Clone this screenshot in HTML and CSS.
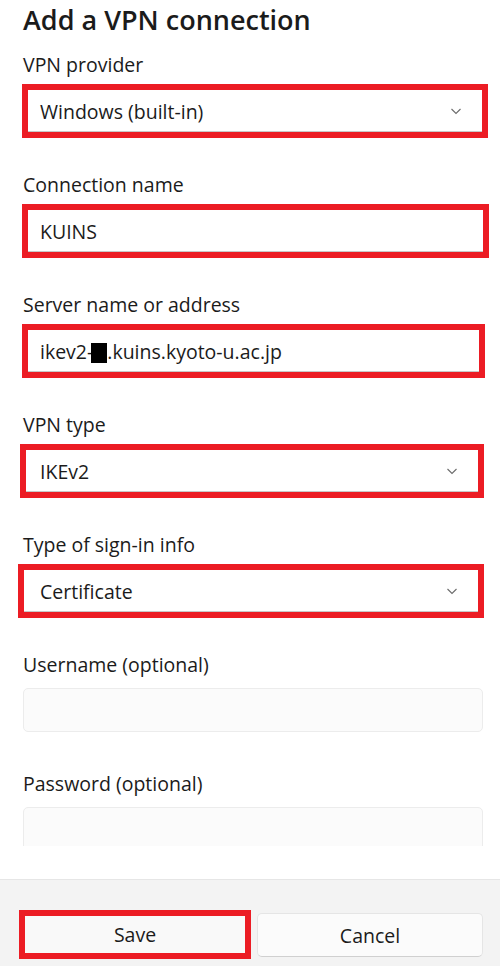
FILE: index.html
```html
<!DOCTYPE html>
<html lang="en">
<head>
    <meta charset="UTF-8">
    <meta name="viewport" content="width=device-width, initial-scale=1.0">
    <title>Add a VPN connection</title>
    <link rel="stylesheet" href="styles.css">
</head>
<body>
    <div class="dialog">
        <div class="scroll">
            <h1>Add a VPN connection</h1>

            <div class="group">
                <label>VPN provider</label>
                <div class="field marked">
                    <span>Windows (built-in)</span>
                    <svg class="chevron" width="12" height="12" viewBox="0 0 12 12"><path d="M1.5 4 L6 8.5 L10.5 4"/></svg>
                </div>
            </div>

            <div class="group">
                <label>Connection name</label>
                <div class="field marked wide">
                    <span>KUINS</span>
                </div>
            </div>

            <div class="group">
                <label>Server name or address</label>
                <div class="field marked narrow">
                    <span>ikev2-<i class="redact"></i>.kuins.kyoto-u.ac.jp</span>
                </div>
            </div>

            <div class="group">
                <label>VPN type</label>
                <div class="field marked shift">
                    <span>IKEv2</span>
                    <svg class="chevron" width="12" height="12" viewBox="0 0 12 12"><path d="M1.5 4 L6 8.5 L10.5 4"/></svg>
                </div>
            </div>

            <div class="group">
                <label>Type of sign-in info</label>
                <div class="field marked shift-more">
                    <span>Certificate</span>
                    <svg class="chevron" width="12" height="12" viewBox="0 0 12 12"><path d="M1.5 4 L6 8.5 L10.5 4"/></svg>
                </div>
            </div>

            <div class="group">
                <label>Username (optional)</label>
                <div class="field plain"></div>
            </div>

            <div class="group loose">
                <label>Password (optional)</label>
                <div class="field plain"></div>
            </div>
        </div>

        <div class="footer">
            <button class="btn marked-btn">Save</button>
            <button class="btn">Cancel</button>
        </div>
    </div>
</body>
</html>
```

FILE: styles.css
```css
body {
    margin: 0;
    background: #fff;
    color: #1b1b1b;
    font-family: 'Open Sans', 'Noto Sans', sans-serif;
}
.dialog {
    width: 500px;
    height: 966px;
    display: flex;
    flex-direction: column;
}
.scroll {
    height: 846px;
    overflow: hidden;
    padding: 0 17px 0 23px;
}
h1 {
    margin: 0;
    padding-top: 2px;
    font-size: 27px;
    font-weight: 600;
    line-height: 36px;
}
.group {
    margin-top: 35px;
}
.group:first-of-type {
    margin-top: 15px;
}
.group.loose {
    margin-top: 40px;
}
label {
    display: block;
    font-size: 19.5px;
    line-height: 24px;
    margin-bottom: 7px;
}
.field {
    display: flex;
    align-items: center;
    justify-content: space-between;
    box-sizing: border-box;
    font-size: 19.5px;
}
.field.marked {
    height: 54px;
    margin: 0 -5px 0 -1px;
    padding: 0 20px 0 12px;
    border: 6px solid #ec1c24;
    background: #fff;
    box-shadow: inset 0 -1px 0 #c8c8c8;
}
.field.wide { margin-right: -6px; }
.field.narrow { margin-right: -2px; }
.field.shift { margin-left: -3px; margin-right: -1px; padding-left: 14px; }
.field.shift-more { margin-left: -5px; margin-right: -1px; padding-left: 16px; }
.field.plain {
    height: 44px;
    margin-top: 11px;
    background: #fbfbfb;
    border: 1px solid #ececec;
    border-radius: 5px;
}
.chevron {
    fill: none;
    stroke: #6b6b6b;
    stroke-width: 1.1;
}
.redact {
    display: inline-block;
    width: 16px;
    height: 20px;
    margin-left: -2px;
    vertical-align: -4px;
    background: #000;
}
.footer {
    margin-top: 33px;
    flex: 1;
    display: grid;
    grid-template-columns: 1fr 1fr;
    gap: 8px;
    align-items: start;
    padding: 33px 17px 0 23px;
    background: #f3f3f3;
    border-top: 1px solid #e6e6e6;
}
.btn {
    height: 44px;
    font-family: inherit;
    font-size: 19.5px;
    color: #1b1b1b;
    background: #fbfbfb;
    border: 1px solid #e5e5e5;
    border-bottom-color: #d0d0d0;
    border-radius: 5px;
}
.btn.marked-btn {
    height: 49px;
    margin: -3px -2px 0 -4px;
    border: 6px solid #ec1c24;
    border-radius: 0;
    background: #f9f9f9;
}
```
